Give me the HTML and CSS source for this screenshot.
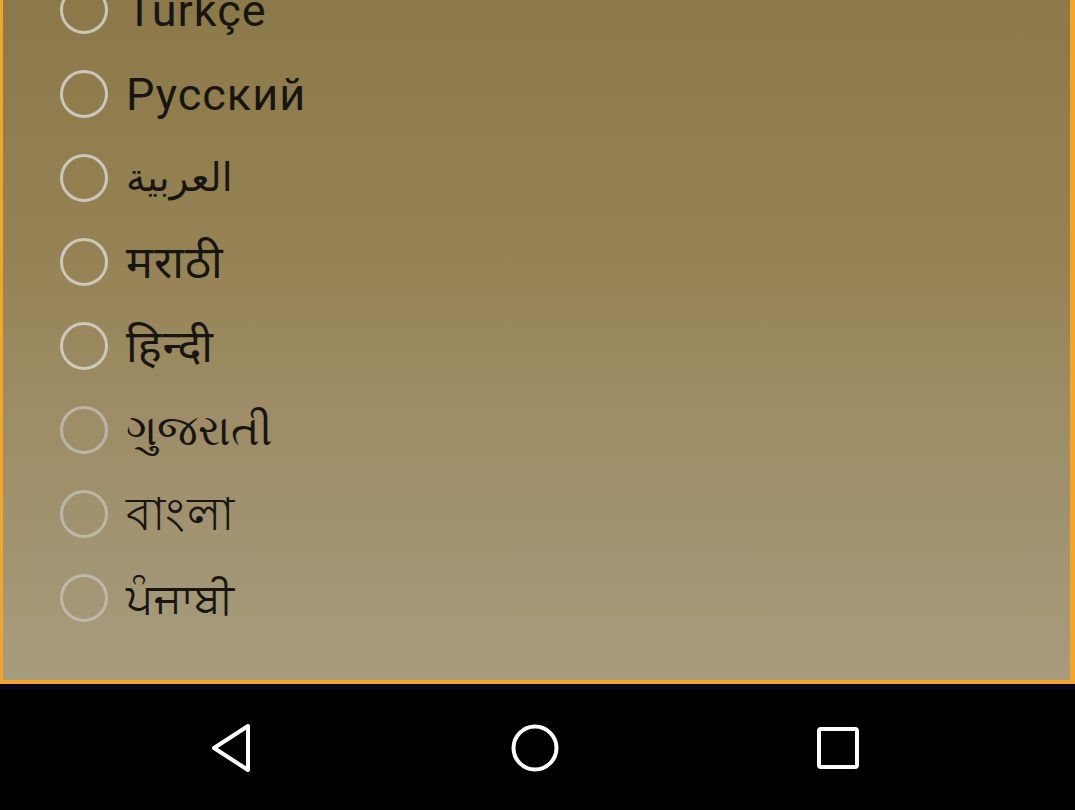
FILE: index.html
```html
<!DOCTYPE html>
<html lang="en">
<head>
<meta charset="utf-8">
<title>Language</title>
<link rel="stylesheet" href="styles.css">
</head>
<body>
<div class="screen">
  <div class="panel">
    <ul class="langs">
      <li class="row"><span class="radio"></span><span class="label">Türkçe</span></li>
      <li class="row"><span class="radio"></span><span class="label">Русский</span></li>
      <li class="row"><span class="radio"></span><span class="label arabic" lang="ar">العربية</span></li>
      <li class="row"><span class="radio"></span><span class="label" lang="mr">मराठी</span></li>
      <li class="row"><span class="radio"></span><span class="label" lang="hi">हिन्दी</span></li>
      <li class="row"><span class="radio faint"></span><span class="label tight" lang="gu">ગુજરાતી</span></li>
      <li class="row"><span class="radio faint"></span><span class="label wide" lang="bn">বাংলা</span></li>
      <li class="row"><span class="radio faint"></span><span class="label tight" lang="pa">ਪੰਜਾਬੀ</span></li>
    </ul>
  </div>
  <nav class="navbar">
    <button class="navbtn" aria-label="Back">
      <svg width="48" height="52" viewBox="0 0 48 52"><path d="M40 4 L6 26 L40 48 Z" fill="none" stroke="#fff" stroke-width="4" stroke-linejoin="round"/></svg>
    </button>
    <button class="navbtn" aria-label="Home">
      <svg width="52" height="52" viewBox="0 0 52 52"><circle cx="26" cy="26" r="21.5" fill="none" stroke="#fff" stroke-width="4"/></svg>
    </button>
    <button class="navbtn" aria-label="Recents">
      <svg width="48" height="48" viewBox="0 0 48 48"><rect x="5" y="5" width="38" height="38" rx="2" fill="none" stroke="#fff" stroke-width="4"/></svg>
    </button>
  </nav>
</div>
</body>
</html>
```
FILE: styles.css
```css
html, body {
  margin: 0;
  padding: 0;
  background: #000;
}
.screen {
  width: 1075px;
  height: 810px;
  display: flex;
  flex-direction: column;
  overflow: hidden;
}
.panel {
  height: 680px;
  flex: none;
  border-left: 3px solid #f3a52a;
  border-right: 5px solid #f3a52a;
  border-bottom: 4px solid #f3a52a;
  background: linear-gradient(180deg, #8c794a 0%, #958253 35%, #9d8c65 60%, #a69c7d 100%);
  overflow: hidden;
}
.langs {
  list-style: none;
  margin: -32px 0 0 0;
  padding: 0 0 0 57px;
}
.row {
  height: 84px;
  display: flex;
  align-items: center;
  gap: 18px;
}
.radio {
  width: 42px;
  height: 42px;
  border: 3px solid rgba(214, 212, 206, 0.85);
  border-radius: 50%;
  flex: none;
}
.radio.faint {
  border-color: rgba(200, 198, 192, 0.7);
}
.label {
  font-family: Roboto, "Noto Sans", "DejaVu Sans", sans-serif;
  font-size: 45px;
  letter-spacing: 1px;
  color: #171612;
  line-height: 1;
}
.label.arabic {
  font-size: 39px;
  letter-spacing: 0;
}
.label.tight {
  font-size: 43px;
  letter-spacing: 0;
}
.label.wide {
  font-size: 46px;
  letter-spacing: 1.5px;
}
.navbar {
  flex: 1;
  background: #000;
  border-top: 5px solid #07091a;
  display: flex;
  align-items: center;
  justify-content: center;
  gap: 251px;
  padding: 0 6px 4px 0;
}
.navbtn {
  background: none;
  border: 0;
  padding: 0;
  width: 52px;
  height: 52px;
  display: flex;
  align-items: center;
  justify-content: center;
}
```
